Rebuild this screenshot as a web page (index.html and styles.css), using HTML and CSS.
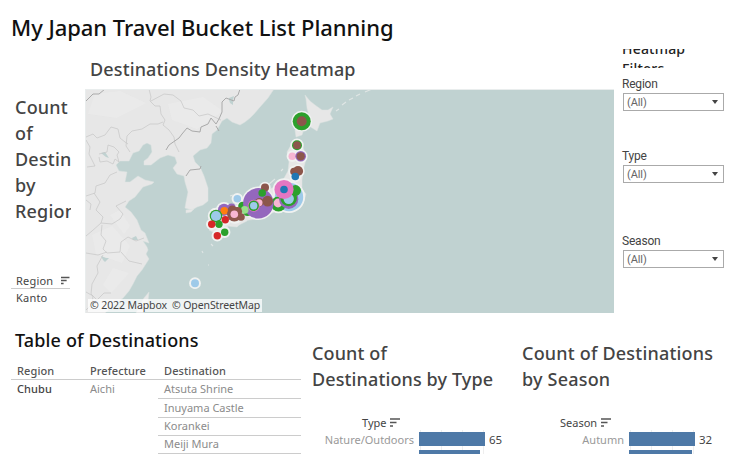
FILE: index.html
```
<!DOCTYPE html>
<html lang="en">
<head>
<meta charset="utf-8">
<title>My Japan Travel Bucket List Planning</title>
<link rel="stylesheet" href="styles.css">
</head>
<body>
<svg class="defs" width="0" height="0"><symbol id="sort" viewBox="0 0 10 9"><path d="M0 1h10M0 4.5h6.5M0 8h3" stroke="#555" stroke-width="1.7"/></symbol></svg>
<main class="dashboard">
  <h1><span>My Japan Travel Bucket List Planning</span></h1>
  <section class="top">
    <aside class="regions">
      <h2>Count<br>of<br>Destin<br>by<br>Region</h2>
      <div class="region-head"><span>Region</span><svg class="sort"><use href="#sort"/></svg></div>
      <div class="region-row"><span>Kanto</span></div>
    </aside>
    <section class="heatmap">
      <h2><span>Destinations Density Heatmap</span></h2>
      <div class="map">
        <svg viewBox="85 89 529 224" width="529" height="224">
          <path class="sea" d="M85 89h529v224H85z"/>
          <g class="land">
            <path d="M85 89H274L268 98 260 107 254 114 250 118 245 122 240 125 232 122 227 118 222 121 217 130 212 134 211 143 207 148 200 150 193 156 195 162 200 167 204 176 208 188 208 201 203 205 197 207 192 210 185 208 186 202 188 192 185 182 184 176 177 174 173 168 177 163 175 157 168 155 160 158 151 165 144 165 144 161 148 158 152 152 151 145 147 143 143 145 139 151 133 153 129 161 120 161 116 165 119 171 127 172 125 182 130 182 138 176 145 180 154 182 152 184 143 187 135 197 129 201 125 207 131 212 137 220 141 230 145 233 149 243 143 241 147 247 148 250 146 254 149 259 142 270 137 276 133 284 129 291 123 298 113 306 105 313H85Z"/>
            <path d="M144 298l5-6-1 9-5 12h-7zM186 210l8-1-3 3-5 1z"/>
            <path d="M305 95l5 6 5 4 7 5 6 0 5-3-3 7 3 5-5 2-8 2-3 8-8-5-8 2-2 3 4 1-1 3-6 2-1-7 3-6 8-3 3-5-2-8-1-9z"/>
            <path d="M294 140l6 0 4 10 2 9-3 12-1 9 0 9 4 5-2 7-6 5-9 4-7-1-5 2-12 5-9 3-13 2-6 6-10-1-4 6-8 1-6-3 7-6 8-5 9-1 9-9 8-4 8-11 8-3 8-4 9-7 5-9 1-9-2-10z"/>
            <path d="M208 216l8-3 9 4 3 9-2 10-8 3-5-7 0-9zM227 218l9-2 11 0 0 5-8 4-8 0z"/>
          </g>
          <g class="relief">
            <path d="M95 94l25-3 26 12-30 15-28-4zM168 104l35-7 20 14-26 18-25-9zM92 235l20-9 18 20-8 17-26-9zM120 210l10 16-6 8-14-19zM113 268l16 5-18 20-8-8z"/>
          </g>
          <path class="lake" d="M229 98l5-2-1 4 0 5-3-2-1-3zM101 153l4-1 4 6-3-1zM101 256l5 2 3 0-4 4-2-2zM132 238l4-2 2 4-5 0z"/>
          <g class="province">
            <path d="M149 89l2 8-1 4 5 5 5 0 1 8 4 6-2 5 6 5 5 7 1 7 4 8M151 101l13-7 9 1 8 6 3 7 9 2 6 6 9-2 13 6M163 122l-5 2-8 0-8 5-10 2-5 5-1 10 4 6M86 137l7-3 4 4 8-3 6-8 7 2 2 9 5 4 3 2M99 154l8-2 1-7 6 2 5 5-2 3 2 7-4-3-2 5-6-3-7 1-1-5M86 140l4 7-1 7 3 6 3 6-8 1M117 172l-7 3-5 8-9 3-1 7-9 3M94 193l6 9-4 8 7 7-2 6 11 1 8-5 3-5-7-8 10-5M101 223l-9 8-6 5M102 225l-1 10 5 6-3 8 4 4 13-1 1-10 7-5 8 4 8-3M107 252l-9 3-12-2M121 252l8 9 13 3M103 255l-6 11 1 7-6 11-1 10 6 6 7-7 7 0M86 292l7 4-1 8-6 6M86 200l5 4-1 6"/>
          </g>
          <path class="border" d="M86 101l7-7 6 0 6-5M240 89l-2 6-3 2-1 4-8-3-4 4 0 10-3 7-3 5-5-6-3 6-7 3-1 5-8-1-5-3-5 6-3 4-10 7-3 5M186 176l4-6 10-1 1-3M216 126l3 5"/>
          <path class="isles" d="M336 111l3-2M342 105l4-3M349 100l4-2M356 96l4-2M365 92l7-3M281 171l2-2M268 185l7-6M230 196l3-1M211 244l2 2M202 251l1 2M208 265l1 0"/>
          <g class="halo">
            <circle cx="301.7" cy="121.3" r="9.8"/><circle cx="297" cy="145.2" r="6"/><circle cx="292.3" cy="156.3" r="5"/><circle cx="300.7" cy="156.3" r="6.2"/><circle cx="298" cy="171" r="6"/><circle cx="294" cy="171.5" r="5"/><circle cx="295.3" cy="176.5" r="5"/><circle cx="289" cy="197" r="15.3"/><circle cx="284" cy="189.5" r="10.5"/><circle cx="278.5" cy="204" r="8.5"/><circle cx="258.3" cy="203.3" r="16"/><circle cx="265" cy="187.5" r="5"/><circle cx="237.3" cy="198.7" r="5"/><circle cx="243" cy="207" r="6"/><circle cx="235" cy="214" r="9"/><circle cx="224" cy="210" r="7.3"/><circle cx="216" cy="216" r="7.5"/><circle cx="211.7" cy="224.3" r="5"/><circle cx="219" cy="224.3" r="5"/><circle cx="225.3" cy="219.7" r="5"/><circle cx="217.3" cy="235.7" r="5"/><circle cx="224.7" cy="232.3" r="5"/><circle cx="195" cy="283.2" r="5.2"/>
          </g>
          <circle class="green" cx="301.7" cy="121.3" r="9"/><circle class="brown" cx="301.7" cy="121.3" r="5"/>
          <circle class="green" cx="297" cy="145.2" r="5"/><circle class="brown" cx="297" cy="145.2" r="3.9"/>
          <circle class="rose" cx="292.3" cy="156.3" r="3.8"/><circle class="purple" cx="300.7" cy="156.3" r="5.3"/><circle class="brown" cx="300.7" cy="156.3" r="4.1"/>
          <circle class="brown" cx="298" cy="171" r="5.1"/><circle class="brown" cx="294" cy="171.5" r="3.8"/><circle class="blue" cx="295.3" cy="176.5" r="3.8"/>
          <circle class="sky" cx="289" cy="197" r="14.2"/><circle class="green" cx="278.5" cy="204" r="7.6"/><circle class="rose" cx="278" cy="203" r="4.4"/>
          <circle class="purple" cx="288.7" cy="199.3" r="9.6"/><circle class="green" cx="288.7" cy="198" r="8.3"/><circle class="sky" cx="288.7" cy="198.7" r="5.2"/><circle class="green" cx="295.5" cy="190.5" r="5.4"/>
          <circle class="pink" cx="284" cy="189.5" r="9.6"/><circle class="blue" cx="284" cy="189.5" r="3.8"/>
          <circle class="green" cx="242.5" cy="206" r="4.3"/><circle class="green" cx="247.5" cy="212" r="4"/>
          <circle class="purple" cx="258.3" cy="203.3" r="15.2"/>
          <circle class="brown" cx="265" cy="187.5" r="4"/><circle class="green" cx="262.2" cy="193" r="3.8"/><circle class="brown" cx="267.6" cy="201.2" r="5.4"/>
          <circle class="brown" cx="259.4" cy="202.3" r="4.3"/><circle class="rose" cx="259" cy="202.8" r="3.5"/><circle class="pink" cx="253.7" cy="205.7" r="6"/><circle class="green" cx="253.7" cy="205.7" r="5.2"/><circle class="sky" cx="253.7" cy="205.7" r="3.7"/>
          <circle class="lime" cx="244.7" cy="209.9" r="3.8"/><circle class="sky" cx="237.3" cy="198.7" r="3.8"/>
          <circle class="purple" cx="224" cy="209.8" r="6.1"/><circle class="purple" cx="231.6" cy="207.5" r="4"/><circle class="orange" cx="224.3" cy="210.7" r="3.8"/>
          <circle class="brown" cx="232.3" cy="210" r="4.5"/><circle class="brown" cx="237.5" cy="211.5" r="4.6"/><circle class="brown" cx="234.3" cy="214.3" r="7.2"/><circle class="brown" cx="241" cy="217" r="3.8"/><circle class="rose" cx="234.3" cy="214.2" r="3.8"/>
          <circle class="green" cx="216" cy="216" r="6.3"/><circle class="sky" cx="216" cy="216" r="5.1"/>
          <circle class="red" cx="225.3" cy="219.7" r="3.7"/><circle class="green" cx="219" cy="224.3" r="3.7"/><circle class="red" cx="211.7" cy="224.3" r="3.7"/><circle class="red" cx="217.3" cy="235.7" r="3.7"/><circle class="green" cx="224.7" cy="232.3" r="3.7"/><circle class="sky" cx="195" cy="283.2" r="4"/>
        </svg>
        <div class="credit"><span>© 2022 Mapbox</span><span>© OpenStreetMap</span></div>
      </div>
    </section>
    <aside class="filters">
      <h3>Heatmap<br>Filters</h3>
      <div class="filter"><label>Region</label><div class="select"><span>(All)</span><i></i></div></div>
      <div class="filter"><label>Type</label><div class="select"><span>(All)</span><i></i></div></div>
      <div class="filter"><label>Season</label><div class="select"><span>(All)</span><i></i></div></div>
    </aside>
  </section>
  <section class="bottom">
    <section class="places">
      <h2><span>Table of Destinations</span></h2>
      <div class="row head"><span>Region</span><span>Prefecture</span><span>Destination</span></div>
      <div class="row"><b>Chubu</b><span>Aichi</span><span class="place">Atsuta Shrine</span></div>
      <div class="row"><b></b><span></span><span class="place">Inuyama Castle</span></div>
      <div class="row"><b></b><span></span><span class="place">Korankei</span></div>
      <div class="row"><b></b><span></span><span class="place">Meiji Mura</span></div>
    </section>
    <section class="chart types">
      <h2>Count of<br>Destinations by Type</h2>
      <div class="chart-head"><span>Type</span><svg class="sort"><use href="#sort"/></svg></div>
      <div class="bars">
        <div class="bar-row"><span class="name">Nature/Outdoors</span><i class="bar" style="width:66px"></i><span class="value">65</span></div>
        <div class="bar-row"><span class="name"></span><i class="bar" style="width:61px"></i></div>
      </div>
    </section>
    <section class="chart seasons">
      <h2>Count of Destinations<br>by Season</h2>
      <div class="chart-head"><span>Season</span><svg class="sort"><use href="#sort"/></svg></div>
      <div class="bars">
        <div class="bar-row"><span class="name">Autumn</span><i class="bar" style="width:66px"></i><span class="value">32</span></div>
        <div class="bar-row"><span class="name"></span><i class="bar" style="width:63px"></i></div>
      </div>
    </section>
  </section>
</main>
</body>
</html>
```
FILE: styles.css
```
* { box-sizing: border-box; }
body { margin: 0; background: #fff; color: #444; font-family: "Noto Sans", sans-serif; font-size: 11px; }
h1, h2, h3 { margin: 0; font-weight: 500; white-space: nowrap; }
.defs { display: block; }
.dashboard { width: 736px; height: 454px; overflow: hidden; }
h1 { height: 49px; padding: 11px 0 0 11px; color: #111; font-size: 22px; line-height: 32px; letter-spacing: -.05px; }
h2 { font-size: 18px; line-height: 26px; letter-spacing: .2px; }
.sort { width: 10px; height: 9px; }

.top { display: grid; grid-template-columns: 85px 529px 122px; height: 275px; }
.regions { padding: 45px 14px 0 11px; }
.regions h2 { height: 178px; padding-left: 4px; overflow: hidden; }
.region-head { display: flex; align-items: center; gap: 8px; height: 17px; margin-right: 1px; padding-left: 5px; border-bottom: 1px solid #ccc; letter-spacing: .2px; }
.region-row { padding-left: 5px; line-height: 18px; letter-spacing: .2px; }

.heatmap h2 { height: 40px; padding: 7px 0 0 5px; letter-spacing: .13px; }
.map { position: relative; height: 224px; border: solid #e9eded; border-width: 1px 0 0 1px; overflow: hidden; }
.map svg { display: block; margin: -1px 0 0 -1px; }
.credit { position: absolute; left: 2px; bottom: 1px; display: flex; gap: 5px; height: 13px; padding: 0 2px; background: rgba(255,255,255,.75); font-size: 10.5px; line-height: 13px; letter-spacing: -.1px; white-space: nowrap; }
.sea, .lake { fill: #c0d2d1; }
.land { fill: #e7e7e7; stroke: #dce2e1; stroke-width: .5; }
.relief { fill: #ededed; opacity: .55; }
.province { fill: none; stroke: #c6c6c6; stroke-width: .7; }
.border { fill: none; stroke: #aaa; stroke-width: 1; }
.isles { stroke: #e0e6e5; stroke-width: 1.1; }
.halo { fill: #f0f2f1; stroke: #f0f2f1; stroke-width: 1.4; }
.green { fill: #2ca02c; }
.brown { fill: #8c564b; }
.rose { fill: #f7b6d2; }
.purple { fill: #9467bd; }
.blue { fill: #1f77b4; }
.sky { fill: #9ecae9; }
.pink { fill: #e377c2; }
.lime { fill: #98df8a; }
.orange { fill: #ff7f0e; }
.red { fill: #d62728; }

.filters { padding-left: 8px; font-family: Roboto, sans-serif; }
.filters h3 { display: flex; align-items: center; height: 19px; overflow: hidden; color: #222; font-family: "Noto Sans", sans-serif; font-size: 14px; line-height: 20px; letter-spacing: .2px; }
.filter { height: 72px; padding-top: 9px; }
.filter + .filter + .filter { margin-top: 13px; }
.filter label { display: block; height: 16px; font-size: 12px; line-height: 15px; letter-spacing: -.2px; }
.select { display: flex; align-items: center; justify-content: space-between; width: 101px; height: 18px; margin-left: 1px; padding: 0 5px 0 3px; border: 1px solid #aaa; color: #666; letter-spacing: -.1px; }
.select i { border: 3px solid transparent; border-top: 4px solid #444; border-bottom: 0; }

.bottom { display: grid; grid-template-columns: 301px 210px 225px; height: 130px; }
.places { padding-left: 11px; }
.places h2 { height: 38px; padding: 3px 0 0 4px; color: #111; letter-spacing: .15px; }
.row { display: grid; grid-template-columns: 73px 74px 143px; height: 18.3px; color: #8b8b8b; line-height: 18px; }
.row > * { padding-left: 6px; font-weight: 400; }
.row b { color: #444; font-weight: 500; letter-spacing: .1px; }
.row .place { border-bottom: 1px solid #ccc; }
.head { border-bottom: 1px solid #ccc; color: #555; letter-spacing: .1px; }
.row.head > * { font-weight: 500; }
.chart { padding: 16px 0 0 11px; overflow: hidden; }
.chart h2 { height: 74px; letter-spacing: .12px; }
.seasons h2 { letter-spacing: .2px; }
.chart-head { display: flex; align-items: center; gap: 4px; height: 16px; padding-left: 50px; }
.seasons .chart-head { padding-left: 38px; }
.bars { height: 24px; width: 84px; margin-left: 108px; background: repeating-linear-gradient(90deg, #eee 0 1px, transparent 1px 21px); }
.bar-row { display: flex; align-items: center; height: 18px; width: 210px; margin-left: -108px; }
.name { width: 102px; margin-right: 5px; color: #999; text-align: right; }
.bar { height: 14px; background: #4e79a7; }
.value { margin-left: 4px; font-size: 11.5px; }
```
